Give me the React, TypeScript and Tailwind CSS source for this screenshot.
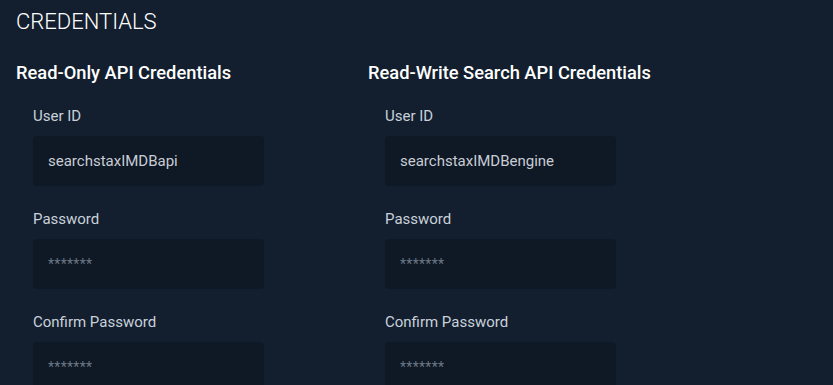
const columns = [
  { title: "Read-Only API Credentials", user: "searchstaxIMDBapi" },
  { title: "Read-Write Search API Credentials", user: "searchstaxIMDBengine" },
];

function Field({ label, value, secret }: { label: string; value: string; secret?: boolean }) {
  return (
    <div className="flex flex-col">
      <label className="text-[15px] leading-[22px] text-[#c9d1db]">{label}</label>
      <div className="mt-[9px] flex h-[50px] w-[231px] items-center rounded-[4px] bg-[#0f1825] px-[15px]">
        <span
          className={
            secret
              ? "text-[14px] tracking-[0.3px] text-[#6b7684]"
              : "text-[15px] text-[#c8cdd4]"
          }
        >
          {value}
        </span>
      </div>
    </div>
  );
}

export default function App() {
  return (
    <div
      className="h-[385px] w-full overflow-hidden bg-[#131f2e] px-4 pt-2"
      style={{ fontFamily: "Roboto, 'Liberation Sans', sans-serif" }}
    >
      <h1 className="text-[22px] font-light leading-[28px] text-white">CREDENTIALS</h1>
      <div className="mt-6 grid grid-cols-[352px_352px]">
        {columns.map((col) => (
          <section key={col.title}>
            <h2 className="text-[18.3px] font-medium leading-[26px] text-white">{col.title}</h2>
            <div className="mt-[19px] flex flex-col gap-[22px] pl-[17px]">
              <Field label="User ID" value={col.user} />
              <Field label="Password" value="*******" secret />
              <Field label="Confirm Password" value="*******" secret />
            </div>
          </section>
        ))}
      </div>
    </div>
  );
}
